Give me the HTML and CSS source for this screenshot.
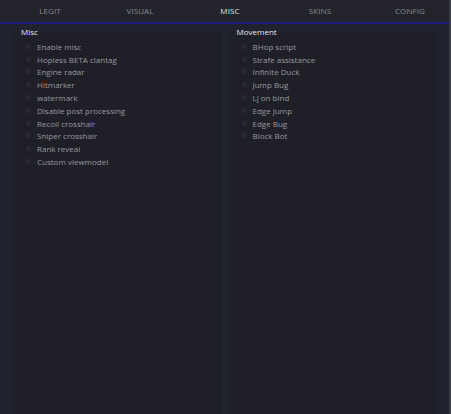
FILE: index.html
```html
<!DOCTYPE html>
<html lang="en">
<head>
    <meta charset="UTF-8">
    <title>Menu - Misc</title>
    <link rel="stylesheet" href="styles.css">
</head>
<body>
    <div class="menu">
        <div class="tabs">
            <div class="tab">LEGIT</div>
            <div class="tab">VISUAL</div>
            <div class="tab active">MISC</div>
            <div class="tab">SKINS</div>
            <div class="tab">CONFIG</div>
        </div>
        <div class="content">
            <div class="group">
                <div class="group-title">Misc</div>
                <ul class="options">
                    <li><span class="check"></span>Enable misc</li>
                    <li><span class="check"></span>Hopless BETA clantag</li>
                    <li><span class="check"></span>Engine radar</li>
                    <li><span class="check"></span>Hitmarker</li>
                    <li><span class="check"></span>watermark</li>
                    <li><span class="check"></span>Disable post processing</li>
                    <li><span class="check"></span>Recoil crosshair</li>
                    <li><span class="check"></span>Sniper crosshair</li>
                    <li><span class="check"></span>Rank reveal</li>
                    <li><span class="check"></span>Custom viewmodel</li>
                </ul>
            </div>
            <div class="group">
                <div class="group-title">Movement</div>
                <ul class="options">
                    <li><span class="check"></span>BHop script</li>
                    <li><span class="check"></span>Strafe assistance</li>
                    <li><span class="check"></span>Infinite Duck</li>
                    <li><span class="check"></span>Jump Bug</li>
                    <li><span class="check"></span>Lj on bind</li>
                    <li><span class="check"></span>Edge Jump</li>
                    <li><span class="check"></span>Edge Bug</li>
                    <li><span class="check"></span>Block Bot</li>
                </ul>
            </div>
        </div>
    </div>
</body>
</html>
```

FILE: styles.css
```css
html, body {
    margin: 0;
    height: 100%;
}
body {
    font-family: 'Open Sans', 'DejaVu Sans', sans-serif;
    background: #20222d;
    overflow: hidden;
}
.menu {
    height: 100%;
    display: flex;
    flex-direction: column;
    border-right: 2px solid #3a3c44;
    box-sizing: border-box;
}
.tabs {
    display: flex;
    height: 22px;
    padding-left: 5px;
    background: #22232b;
    border-bottom: 2px solid #1d1a82;
}
.tab {
    flex: 0 0 90px;
    text-align: center;
    font-size: 8px;
    line-height: 21px;
    color: #8b8c92;
    letter-spacing: 0.1px;
}
.tab.active {
    color: #e4e4e8;
}
.content {
    flex: 1;
    display: flex;
    gap: 6px;
    padding: 3px 12px 0 12px;
}
.group {
    width: 210px;
    display: flex;
    flex-direction: column;
}
.group-title {
    font-size: 8px;
    color: #e6e6ea;
    line-height: 10px;
    padding-left: 9px;
    margin-bottom: -5px;
    position: relative;
}
.options {
    flex: 1;
    list-style: none;
    margin: 0;
    padding: 8px 0 0 14px;
    background: #1f1f27;
}
.options li {
    display: flex;
    align-items: center;
    height: 12.8px;
    font-size: 8px;
    color: #99999f;
}
.check {
    width: 5px;
    height: 5px;
    background: #272830;
    margin-right: 6px;
}
```
